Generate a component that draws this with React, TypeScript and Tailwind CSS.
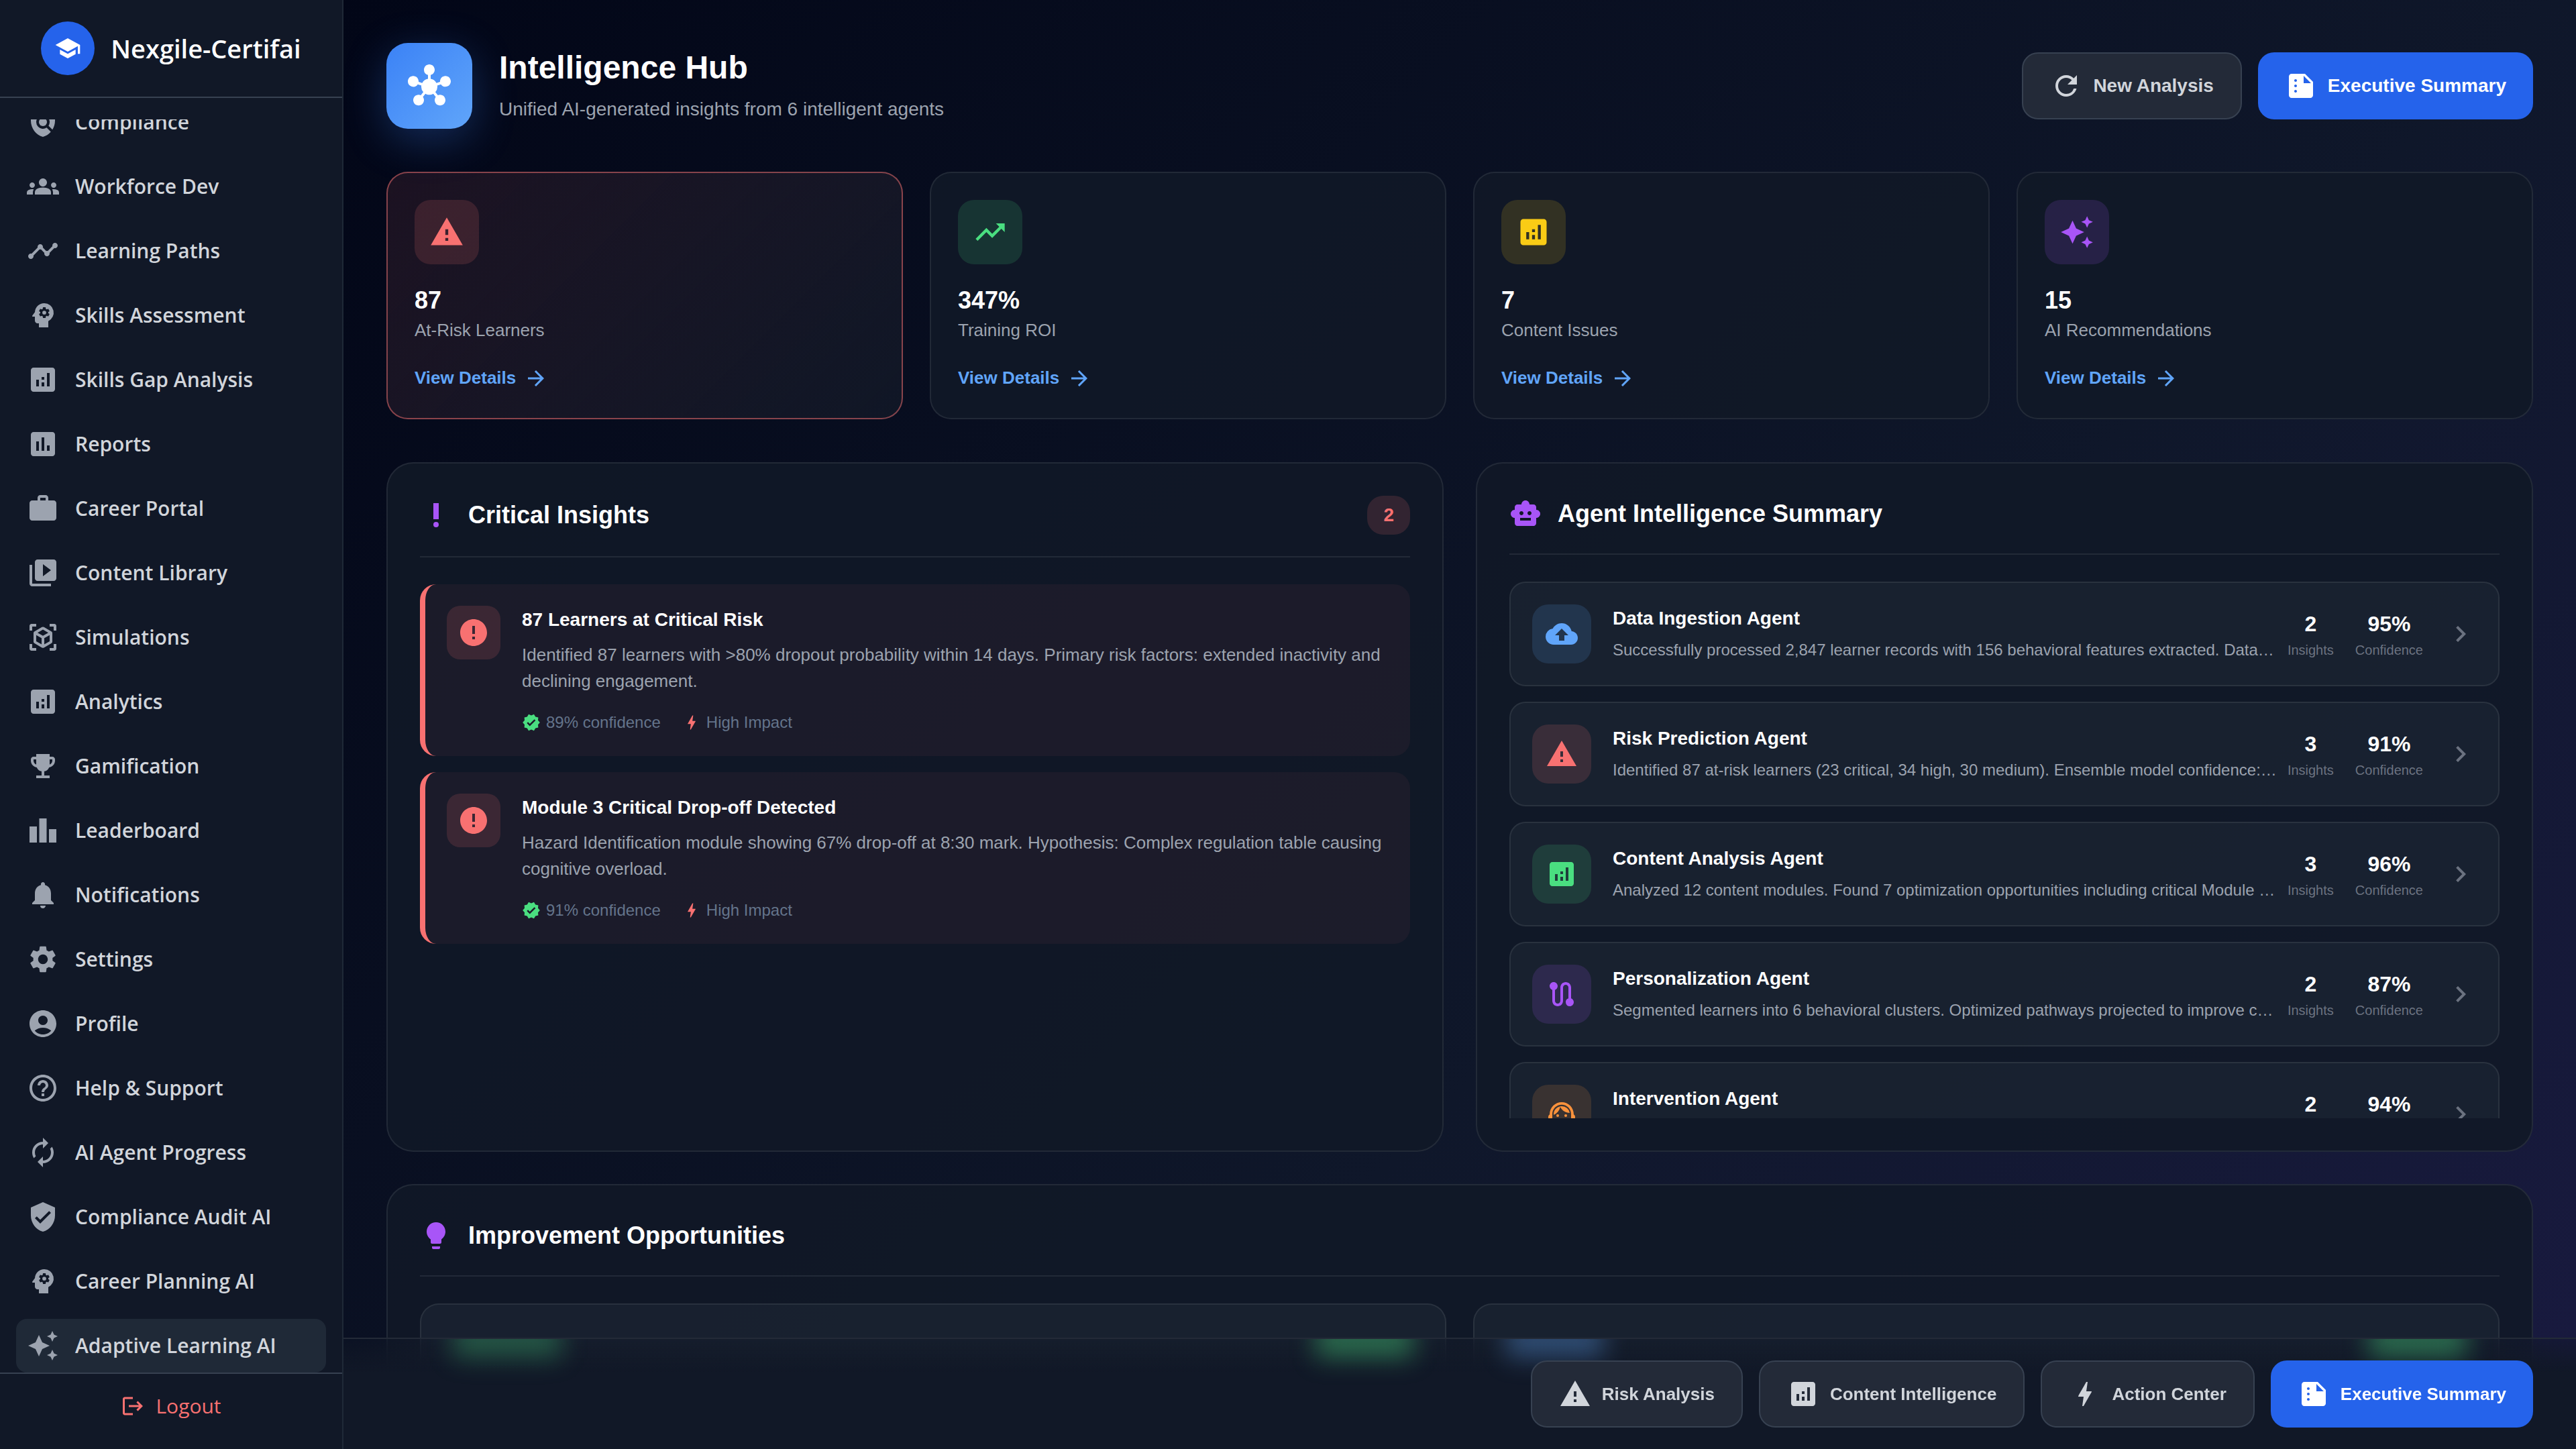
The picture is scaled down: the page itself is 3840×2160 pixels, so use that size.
import type { ReactNode } from "react";
import type { IconType } from "react-icons";
import {
  MdAccountCircle,
  MdAnalytics,
  MdArrowForward,
  MdAssessment,
  MdAutoAwesome,
  MdAutorenew,
  MdBackup,
  MdBolt,
  MdChevronRight,
  MdEmojiEvents,
  MdError,
  MdGroups,
  MdHelpOutline,
  MdHub,
  MdLeaderboard,
  MdLightbulb,
  MdLogout,
  MdNotifications,
  MdPolicy,
  MdPriorityHigh,
  MdPsychology,
  MdRefresh,
  MdRoute,
  MdSchool,
  MdSettings,
  MdSmartToy,
  MdSummarize,
  MdSupportAgent,
  MdTimeline,
  MdTrendingUp,
  MdVerified,
  MdVerifiedUser,
  MdVideoLibrary,
  MdViewInAr,
  MdWarning,
  MdWork,
} from "react-icons/md";

const navItems: { label: string; icon: IconType; active?: boolean }[] = [
  { label: "Compliance", icon: MdPolicy },
  { label: "Workforce Dev", icon: MdGroups },
  { label: "Learning Paths", icon: MdTimeline },
  { label: "Skills Assessment", icon: MdPsychology },
  { label: "Skills Gap Analysis", icon: MdAnalytics },
  { label: "Reports", icon: MdAssessment },
  { label: "Career Portal", icon: MdWork },
  { label: "Content Library", icon: MdVideoLibrary },
  { label: "Simulations", icon: MdViewInAr },
  { label: "Analytics", icon: MdAnalytics },
  { label: "Gamification", icon: MdEmojiEvents },
  { label: "Leaderboard", icon: MdLeaderboard },
  { label: "Notifications", icon: MdNotifications },
  { label: "Settings", icon: MdSettings },
  { label: "Profile", icon: MdAccountCircle },
  { label: "Help & Support", icon: MdHelpOutline },
  { label: "AI Agent Progress", icon: MdAutorenew },
  { label: "Compliance Audit AI", icon: MdVerifiedUser },
  { label: "Career Planning AI", icon: MdPsychology },
  { label: "Adaptive Learning AI", icon: MdAutoAwesome, active: true },
];

const stats: { value: string; label: string; icon: IconType; tone: string; alert?: boolean }[] = [
  { value: "87", label: "At-Risk Learners", icon: MdWarning, tone: "bg-[#f87171]/15 text-[#f87171]", alert: true },
  { value: "347%", label: "Training ROI", icon: MdTrendingUp, tone: "bg-[#4ade80]/15 text-[#4ade80]" },
  { value: "7", label: "Content Issues", icon: MdAnalytics, tone: "bg-[#facc15]/15 text-[#facc15]" },
  { value: "15", label: "AI Recommendations", icon: MdAutoAwesome, tone: "bg-[#a855f7]/15 text-[#a855f7]" },
];

const insights = [
  {
    title: "87 Learners at Critical Risk",
    text: "Identified 87 learners with >80% dropout probability within 14 days. Primary risk factors: extended inactivity and declining engagement.",
    confidence: "89% confidence",
  },
  {
    title: "Module 3 Critical Drop-off Detected",
    text: "Hazard Identification module showing 67% drop-off at 8:30 mark. Hypothesis: Complex regulation table causing cognitive overload.",
    confidence: "91% confidence",
  },
];

const agents: {
  name: string;
  text?: string;
  count: string;
  confidence: string;
  icon: IconType;
  tone: string;
}[] = [
  {
    name: "Data Ingestion Agent",
    text: "Successfully processed 2,847 learner records with 156 behavioral features extracted. Data…",
    count: "2",
    confidence: "95%",
    icon: MdBackup,
    tone: "bg-[#60a5fa]/15 text-[#60a5fa]",
  },
  {
    name: "Risk Prediction Agent",
    text: "Identified 87 at-risk learners (23 critical, 34 high, 30 medium). Ensemble model confidence:…",
    count: "3",
    confidence: "91%",
    icon: MdWarning,
    tone: "bg-[#f87171]/15 text-[#f87171]",
  },
  {
    name: "Content Analysis Agent",
    text: "Analyzed 12 content modules. Found 7 optimization opportunities including critical Module …",
    count: "3",
    confidence: "96%",
    icon: MdAnalytics,
    tone: "bg-[#4ade80]/15 text-[#4ade80]",
  },
  {
    name: "Personalization Agent",
    text: "Segmented learners into 6 behavioral clusters. Optimized pathways projected to improve c…",
    count: "2",
    confidence: "87%",
    icon: MdRoute,
    tone: "bg-[#a855f7]/15 text-[#a855f7]",
  },
  {
    name: "Intervention Agent",
    count: "2",
    confidence: "94%",
    icon: MdSupportAgent,
    tone: "bg-[#fb923c]/15 text-[#fb923c]",
  },
];

function Sidebar() {
  return (
    <aside className="flex w-[512px] shrink-0 flex-col border-r-2 border-[#1f2937] bg-[#111827] font-['Open_Sans',sans-serif]">
      <div className="flex items-center justify-center gap-6 border-b-2 border-[#374151] py-8">
        <span className="flex size-20 items-center justify-center rounded-full bg-[#2563eb] text-white">
          <MdSchool size={40} />
        </span>
        <span className="text-[38px] leading-[60px] font-semibold text-white">Nexgile-Certifai</span>
      </div>
      <div className="flex min-h-0 flex-1 flex-col px-6 pt-8">
        <nav className="flex min-h-0 flex-1 flex-col justify-end gap-4 overflow-hidden">
          {navItems.map(({ label, icon: Icon, active }) => (
            <a
              key={label}
              href="#"
              className={
                active
                  ? "flex shrink-0 items-center gap-6 rounded-2xl bg-[#1f2937] p-4"
                  : "flex shrink-0 items-center gap-6 rounded-2xl p-4"
              }
            >
              <Icon size={48} className="shrink-0 text-[#9ca3af]" />
              <span className="text-[30px] leading-[48px] font-semibold whitespace-nowrap text-[#d1d5db]">{label}</span>
            </a>
          ))}
        </nav>
      </div>
      <div className="flex justify-center border-t-2 border-[#374151] pt-6 pb-10">
        <button type="button" className="flex items-center gap-4 text-[30px] leading-[48px] text-[#f87171]">
          <MdLogout size={36} />
          Logout
        </button>
      </div>
    </aside>
  );
}

function ActionButton({
  icon: Icon,
  primary,
  size,
  children,
}: {
  icon: IconType;
  primary?: boolean;
  size: "base" | "small";
  children: ReactNode;
}) {
  return (
    <button
      type="button"
      className={[
        "flex items-center gap-4 rounded-3xl px-10 font-bold whitespace-nowrap",
        size === "base" ? "text-[28px] leading-[42px]" : "text-[26px] leading-[39px]",
        primary
          ? "bg-[#2563eb] py-[26px] text-white"
          : "border-2 border-[#374151] bg-[#232a38] py-6 text-[#d1d5db]",
      ].join(" ")}
    >
      <Icon size={48} />
      {children}
    </button>
  );
}

function StatCard({ value, label, icon: Icon, tone, alert }: (typeof stats)[number]) {
  return (
    <article
      className={
        alert
          ? "flex flex-col items-start rounded-[32px] border-2 border-[#f87171]/50 bg-[linear-gradient(135deg,rgba(248,113,113,0.1),rgba(17,24,39,0.9))] p-10"
          : "flex flex-col items-start rounded-[32px] border-2 border-white/8 bg-[#111827]/90 p-10"
      }
    >
      <span className={`flex size-24 items-center justify-center rounded-3xl ${tone}`}>
        <Icon size={52} />
      </span>
      <strong className="mt-8 text-[36px] leading-[43px] font-bold text-white">{value}</strong>
      <span className="mt-1 text-[26px] leading-[39px] text-[#9ca3af]">{label}</span>
      <a href="#" className="mt-8 flex items-center gap-3 text-[26px] leading-[39px] font-bold text-[#60a5fa]">
        View Details
        <MdArrowForward size={36} />
      </a>
    </article>
  );
}

function Panel({
  icon: Icon,
  title,
  badge,
  children,
}: {
  icon: IconType;
  title: string;
  badge?: string;
  children: ReactNode;
}) {
  return (
    <section className="min-w-0 rounded-[40px] border-2 border-white/8 bg-[#111827]/90 p-12">
      <header className="mb-10 flex items-center justify-between border-b-2 border-white/8 pb-8">
        <h2 className="flex items-center gap-6 text-[36px] leading-[54px] font-bold text-white">
          <Icon size={48} className="text-[#a855f7]" />
          {title}
        </h2>
        {badge && (
          <span className="rounded-3xl bg-[#f87171]/15 px-6 py-2 text-[28px] leading-[42px] font-bold text-[#f87171]">
            {badge}
          </span>
        )}
      </header>
      {children}
    </section>
  );
}

function InsightCard({ title, text, confidence }: (typeof insights)[number]) {
  return (
    <article className="flex items-start gap-8 rounded-3xl border-l-8 border-[#f87171] bg-[#f87171]/5 p-8">
      <span className="flex size-20 shrink-0 items-center justify-center rounded-[20px] bg-[#f87171]/15 text-[#f87171]">
        <MdError size={48} />
      </span>
      <div className="min-w-0 flex-1">
        <h3 className="text-[28px] leading-[42px] font-bold text-white">{title}</h3>
        <p className="mt-3 text-[26px] leading-[39px] text-[#9ca3af]">{text}</p>
        <div className="mt-6 flex gap-8 text-[24px] leading-[36px] text-[#64748b]">
          <span className="flex items-center gap-2">
            <MdVerified size={28} className="text-[#4ade80]" />
            {confidence}
          </span>
          <span className="flex items-center gap-2">
            <MdBolt size={28} className="text-[#f87171]" />
            High Impact
          </span>
        </div>
      </div>
    </article>
  );
}

function Metric({ value, label }: { value: string; label: string }) {
  return (
    <div className="flex flex-col items-center">
      <strong className="text-[32px] leading-[48px] font-bold text-white">{value}</strong>
      <span className="text-[20px] leading-[30px] text-[#6b7280]">{label}</span>
    </div>
  );
}

function AgentRow({ name, text, count, confidence, icon: Icon, tone }: (typeof agents)[number]) {
  return (
    <article className="flex shrink-0 items-center gap-8 rounded-3xl border-2 border-white/8 bg-[#1f2937]/50 p-8">
      <span className={`flex size-[88px] shrink-0 items-center justify-center rounded-3xl ${tone}`}>
        <Icon size={48} />
      </span>
      <div className="min-w-0 flex-1 self-start">
        <h3 className="text-[28px] leading-[42px] font-bold text-white">{name}</h3>
        {text && <p className="mt-2 text-[24px] leading-[36px] whitespace-nowrap text-[#9ca3af]">{text}</p>}
      </div>
      <Metric value={count} label="Insights" />
      <Metric value={confidence} label="Confidence" />
      <button type="button" aria-label={name} className="text-[#6b7280]">
        <MdChevronRight size={48} />
      </button>
    </article>
  );
}

function OpportunityCard() {
  return <article className="h-[320px] rounded-[28px] border-2 border-white/8 bg-[#1f2937]/50" />;
}

/* Soft colour of the card tags that scroll beneath the frosted footer. */
function FooterGlow() {
  return (
    <div className="absolute inset-0 -z-10 overflow-hidden px-[114px]">
      <div className="-mt-6 grid grid-cols-2 gap-10">
        <div className="flex justify-between px-[50px]">
          <span className="h-[52px] w-40 bg-[#4ade80]/30 blur-[18px]" />
          <span className="h-[52px] w-36 bg-[#4ade80]/40 blur-[18px]" />
        </div>
        <div className="flex justify-between px-[50px]">
          <span className="h-[52px] w-36 bg-[#60a5fa]/35 blur-[18px]" />
          <span className="h-[52px] w-36 bg-[#4ade80]/40 blur-[18px]" />
        </div>
      </div>
    </div>
  );
}

export default function App() {
  return (
    <div className="flex h-screen overflow-hidden bg-[#020617] font-['Liberation_Sans',Arial,sans-serif]">
      <Sidebar />
      <main className="relative min-w-0 flex-1 overflow-hidden bg-[linear-gradient(135deg,#020617_0%,#0f172a_60%,#191a40_100%)]">
        <div className="flex flex-col p-16">
          <header className="flex items-center justify-between">
            <div className="flex items-center gap-10">
              <span className="flex size-32 items-center justify-center rounded-[32px] bg-[linear-gradient(135deg,#3b82f6,#60a5fa)] text-white shadow-[0_16px_64px_rgba(59,130,246,0.3)]">
                <MdHub size={64} />
              </span>
              <div>
                <h1 className="text-[48px] leading-[58px] font-bold text-white">Intelligence Hub</h1>
                <p className="mt-3 text-[28px] leading-[42px] text-[#9ca3af]">
                  Unified AI-generated insights from 6 intelligent agents
                </p>
              </div>
            </div>
            <div className="flex gap-6">
              <ActionButton icon={MdRefresh} size="base">
                New Analysis
              </ActionButton>
              <ActionButton icon={MdSummarize} size="base" primary>
                Executive Summary
              </ActionButton>
            </div>
          </header>

          <div className="mt-16 grid grid-cols-4 gap-10">
            {stats.map((s) => (
              <StatCard key={s.label} {...s} />
            ))}
          </div>

          <div className="mt-16 grid grid-cols-2 gap-12">
            <Panel icon={MdPriorityHigh} title="Critical Insights" badge="2">
              <div className="flex flex-col gap-6">
                {insights.map((i) => (
                  <InsightCard key={i.title} {...i} />
                ))}
              </div>
            </Panel>
            <Panel icon={MdSmartToy} title="Agent Intelligence Summary">
              <div className="flex max-h-[800px] flex-col gap-[23px] overflow-hidden">
                {agents.map((a) => (
                  <AgentRow key={a.name} {...a} />
                ))}
              </div>
            </Panel>
          </div>

          <div className="mt-12">
            <Panel icon={MdLightbulb} title="Improvement Opportunities">
              <div className="grid grid-cols-2 gap-10">
                <OpportunityCard />
                <OpportunityCard />
              </div>
            </Panel>
          </div>
        </div>

        <footer className="absolute inset-x-0 bottom-0 flex justify-end gap-6 border-t-2 border-white/8 bg-[linear-gradient(to_top,#111827_70%,rgba(17,24,39,0.3)_100%)] px-16 py-8 backdrop-blur-[40px]">
          <FooterGlow />
          <ActionButton icon={MdWarning} size="small">
            Risk Analysis
          </ActionButton>
          <ActionButton icon={MdAnalytics} size="small">
            Content Intelligence
          </ActionButton>
          <ActionButton icon={MdBolt} size="small">
            Action Center
          </ActionButton>
          <ActionButton icon={MdSummarize} size="small" primary>
            Executive Summary
          </ActionButton>
        </footer>
      </main>
    </div>
  );
}
